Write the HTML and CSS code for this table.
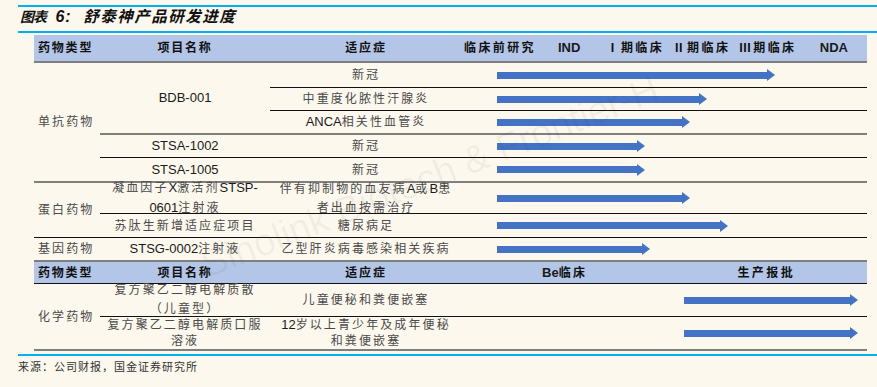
FILE: index.html
```html
<!DOCTYPE html>
<html lang="zh">
<head>
<meta charset="utf-8">
<title>舒泰神产品研发进度</title>
<link rel="stylesheet" href="styles.css">
</head>
<body>
<div class="report">
  <div class="title"><span class="t1">图表</span><span class="t2"> 6: </span><span class="t3">舒泰神产品研发进度</span></div>

  <div class="tbl">
    <div class="c hd">药物类型</div>
    <div class="c hd">项目名称</div>
    <div class="c hd">适应症</div>
    <div class="c hd stages6">
      <span>临床前研究</span><span class="en">IND</span><span>Ⅰ期临床</span><span>Ⅱ期临床</span><span>Ⅲ期临床</span><span class="en">NDA</span>
    </div>

    <div class="c type span5">单抗药物</div>
    <div class="c span3"><span class="en">BDB-001</span></div>
    <div class="c">新冠</div>
    <div class="c st"><div class="arrow" style="width:278px"><i></i><b></b></div></div>

    <div class="c k">中重度化脓性汗腺炎</div>
    <div class="c st k"><div class="arrow" style="width:210px"><i></i><b></b></div></div>

    <div class="c k"><span class="t"><span class="en">ANCA</span>相关性血管炎</span></div>
    <div class="c st k"><div class="arrow" style="width:193px"><i></i><b></b></div></div>

    <div class="c g"><span class="en">STSA-1002</span></div>
    <div class="c g">新冠</div>
    <div class="c st g"><div class="arrow" style="width:148px"><i></i><b></b></div></div>

    <div class="c k"><span class="en">STSA-1005</span></div>
    <div class="c k">新冠</div>
    <div class="c st k"><div class="arrow" style="width:148px"><i></i><b></b></div></div>

    <div class="c type span2 g">蛋白药物</div>
    <div class="c g two"><span class="t">凝血因子<span class="en">X</span>激活剂<span class="en">STSP-</span><br><span class="en">0601</span>注射液</span></div>
    <div class="c g two"><span class="t">伴有抑制物的血友病<span class="en">A</span>或<span class="en">B</span>患<br>者出血按需治疗</span></div>
    <div class="c st g"><div class="arrow" style="width:193px"><i></i><b></b></div></div>

    <div class="c k">苏肽生新增适应症项目</div>
    <div class="c k">糖尿病足</div>
    <div class="c st k"><div class="arrow" style="width:231px"><i></i><b></b></div></div>

    <div class="c type k">基因药物</div>
    <div class="c k"><span class="t"><span class="en">STSG-0002</span>注射液</span></div>
    <div class="c k">乙型肝炎病毒感染相关疾病</div>
    <div class="c st k"><div class="arrow" style="width:153px"><i></i><b></b></div></div>

    <div class="c hd hd2 first">药物类型</div>
    <div class="c hd hd2">项目名称</div>
    <div class="c hd hd2">适应症</div>
    <div class="c hd hd2 stages2"><span><span class="en">Be</span>临床</span><span>生产报批</span></div>

    <div class="c type span2">化学药物</div>
    <div class="c two"><span class="t">复方聚乙二醇电解质散<br>（儿童型）</span></div>
    <div class="c">儿童便秘和粪便嵌塞</div>
    <div class="c st"><div class="arrow late" style="width:174px"><i></i><b></b></div></div>

    <div class="c k two tight"><span class="t">复方聚乙二醇电解质口服<br>溶液</span></div>
    <div class="c k two tight"><span class="t"><span class="en">12</span>岁以上青少年及成年便秘<br>和粪便嵌塞</span></div>
    <div class="c st k"><div class="arrow late" style="width:174px"><i></i><b></b></div></div>
  </div>

  <div class="source">来源：公司财报，国金证券研究所</div>

  <div class="watermark">Sinolink Biotech &amp; Frontier-H</div>
</div>
</body>
</html>
```

FILE: styles.css
```css
html, body {
  margin: 0;
  padding: 0;
  background: #fcf8ee;
}

body {
  font-family: "Liberation Sans", "Noto Sans CJK SC", sans-serif;
  color: #444;
  width: 877px;
  height: 387px;
  overflow: hidden;
}

.report {
  position: relative;
  padding-top: 5px;
  margin-left: 18px;
}

.title {
  border-top: 2px solid #00b0f0;
  border-bottom: 2px solid #00b0f0;
  height: 20px;
  line-height: 20px;
  padding-bottom: 4px;
  padding-left: 2px;
  color: #111;
  font-weight: 700;
  font-style: italic;
  white-space: nowrap;
}

.title .t1 {
  font-size: 14px;
  letter-spacing: -1px;
}

.title .t2 {
  font-family: "Liberation Sans", sans-serif;
  font-size: 16px;
  letter-spacing: 1px;
  margin-left: 4px;
}

.title .t3 {
  font-size: 15.5px;
  letter-spacing: 1.5px;
  margin-left: 6px;
}

.tbl {
  display: grid;
  grid-template-columns: 66px 170px 192px 405px;
  grid-template-rows: 28px 24px 23px 23px 24px 24px 32px 24px 23px 24px 32px 33px;
  width: 833px;
  margin-left: 16px;
  margin-top: 2px;
  border-bottom: 2px solid #7f7f7f;
}

.c {
  box-sizing: border-box;
  display: flex;
  align-items: center;
  justify-content: center;
  text-align: center;
  font-size: 12px;
  letter-spacing: 2.1px;
  line-height: 16px;
  white-space: nowrap;
  color: #4a4a4a;
}

.c .t {
  display: block;
}

.c .en, .hd .en {
  font-size: 13px;
  letter-spacing: 0;
  color: #1a1a1a;
}

.c.two {
  line-height: 19px;
}

.c.two.tight {
  line-height: 16px;
}

.c.type {
  justify-content: flex-start;
  padding-left: 4px;
}

.span5 { grid-row: span 5; }
.span3 { grid-row: span 3; }
.span2 { grid-row: span 2; }

.k { border-top: 1px solid #111; }
.g { border-top: 2px solid #7f7f7f; }

.hd {
  background: #b4c6e7;
  color: #111;
  font-weight: 700;
  letter-spacing: 1.8px;
  border-bottom: 2px solid #7f7f7f;
}

.hd:first-child, .hd.first {
  justify-content: flex-start;
  padding-left: 4px;
}

.hd2 {
  border-top: 2px solid #7f7f7f;
  border-bottom: 1px solid #111;
}

.stages6 {
  display: grid;
  grid-template-columns: repeat(6, 1fr);
  padding-left: 2px;
  letter-spacing: 2.4px;
}

.stages6 span {
  text-align: center;
}

.stages2 {
  display: grid;
  grid-template-columns: 1fr 1fr;
  padding-left: 2px;
  letter-spacing: 2.4px;
}

.stages2 > span {
  text-align: center;
}

.st {
  justify-content: flex-start;
  padding-left: 35px;
}

.arrow {
  display: flex;
  align-items: center;
  height: 12px;
}

.arrow.late {
  margin-left: 187px;
}

.arrow i {
  flex: 1;
  height: 7px;
  background: #4472c4;
}

.arrow b {
  width: 0;
  height: 0;
  border-left: 8px solid #4472c4;
  border-top: 6px solid transparent;
  border-bottom: 6px solid transparent;
}

.source {
  border-top: 2px solid #00b0f0;
  margin-top: 3px;
  padding-top: 4px;
  font-size: 11px;
  line-height: 14px;
  letter-spacing: 1px;
  color: #333;
}

.watermark {
  position: absolute;
  left: 412px;
  top: 177px;
  transform: translate(-50%, -50%) rotate(-21.5deg);
  font-family: "Liberation Sans", sans-serif;
  font-size: 38px;
  color: rgba(60, 60, 60, 0.06);
  white-space: nowrap;
  pointer-events: none;
}
```
